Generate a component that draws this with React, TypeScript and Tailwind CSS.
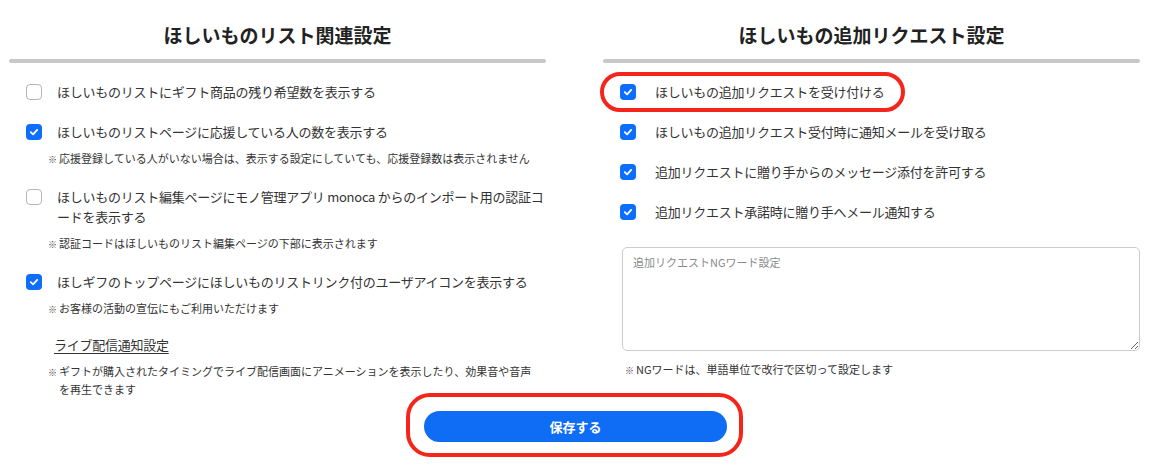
import React from "react";

function Check({ checked }: { checked: boolean }) {
  if (checked) {
    return (
      <span className="mt-[2px] flex h-[16px] w-[16px] shrink-0 items-center justify-center rounded-[4px] bg-[#0d6efd]">
        <svg width="10" height="10" viewBox="0 0 10 10" fill="none">
          <path d="M1.8 5.2 L4.1 7.3 L8.2 2.9" stroke="white" strokeWidth="1.8" strokeLinecap="round" strokeLinejoin="round" />
        </svg>
      </span>
    );
  }
  return <span className="mt-[2px] block h-[16px] w-[16px] shrink-0 rounded-[4px] border border-[#b5b5b5] bg-white" />;
}

function Note({ children }: { children: React.ReactNode }) {
  return (
    <p className="mt-[8px] whitespace-nowrap pl-[50px] -indent-[11px] text-[11px] leading-[17px] text-[#333]">
      <span className="mr-[2px] text-[9px] text-[#444]">※</span>
      {children}
    </p>
  );
}

function LeftRow({ checked, children }: { checked: boolean; children: React.ReactNode }) {
  return (
    <div className="flex items-start gap-[15px] pl-[17px]">
      <Check checked={checked} />
      <span className="whitespace-nowrap text-[13px] leading-[20px] tracking-[-0.25px] text-[#333]">{children}</span>
    </div>
  );
}

function RightRow({ checked, children }: { checked: boolean; children: React.ReactNode }) {
  return (
    <div className="flex items-start gap-[19px] pl-[17px]">
      <Check checked={checked} />
      <span className="whitespace-nowrap text-[13px] leading-[20px] tracking-[-0.25px] text-[#333]">{children}</span>
    </div>
  );
}

function Heading({ children }: { children: React.ReactNode }) {
  return (
    <div>
      <h2 className="mt-[22px] text-center text-[19px] font-bold leading-[26px] text-[#222]">{children}</h2>
      <div className="mt-[11px] h-[4px] rounded-full bg-[#c8c8c8]" />
    </div>
  );
}

export default function App() {
  return (
    <div className="relative h-[469px] w-[1151px] overflow-hidden bg-white font-['Noto_Sans_CJK_JP','Liberation_Sans',sans-serif]">
      <div className="grid grid-cols-[537px_537px] gap-x-[57px] pl-[9px]">
        {/* Left column */}
        <div>
          <Heading>ほしいものリスト関連設定</Heading>
          <div className="mt-[19px]">
            <LeftRow checked={false}>ほしいものリストにギフト商品の残り希望数を表示する</LeftRow>
          </div>
          <div className="mt-[20px]">
            <LeftRow checked={true}>ほしいものリストページに応援している人の数を表示する</LeftRow>
            <Note>応援登録している人がいない場合は、表示する設定にしていても、応援登録数は表示されません</Note>
          </div>
          <div className="mt-[19px]">
            <LeftRow checked={false}>
              ほしいものリスト編集ページにモノ管理アプリ monoca からのインポート用の認証コ
              <br />
              ードを表示する
            </LeftRow>
            <Note>認証コードはほしいものリスト編集ページの下部に表示されます</Note>
          </div>
          <div className="mt-[19px]">
            <LeftRow checked={true}>ほしギフのトップページにほしいものリストリンク付のユーザアイコンを表示する</LeftRow>
            <Note>お客様の活動の宣伝にもご利用いただけます</Note>
          </div>
          <div className="mt-[17px] pl-[45px] text-[13px] leading-[20px]">
            <a className="tracking-[-0.25px] text-[#333] underline underline-offset-[3px]">ライブ配信通知設定</a>
          </div>
          <Note>
            ギフトが購入されたタイミングでライブ配信画面にアニメーションを表示したり、効果音や音声
            <br />
            を再生できます
          </Note>
        </div>

        {/* Right column */}
        <div>
          <Heading>ほしいもの追加リクエスト設定</Heading>
          <div className="mt-[19px] flex flex-col gap-[20px]">
            <RightRow checked={true}>ほしいもの追加リクエストを受け付ける</RightRow>
            <RightRow checked={true}>ほしいもの追加リクエスト受付時に通知メールを受け取る</RightRow>
            <RightRow checked={true}>追加リクエストに贈り手からのメッセージ添付を許可する</RightRow>
            <RightRow checked={true}>追加リクエスト承諾時に贈り手へメール通知する</RightRow>
          </div>
          <div className="ml-[19px] mt-[25px]">
            <textarea
              placeholder="追加リクエストNGワード設定"
              className="block h-[104px] w-[518px] rounded-[5px] border border-[#c9ccd1] px-[10px] py-[5px] text-[11px] leading-[18px] text-[#333] placeholder:text-[#8a8a8a] outline-none"
            />
          </div>
          <p className="mt-[10px] pl-[22px] text-[11px] leading-[17px] text-[#333]">
            <span className="mr-[2px] text-[9px] text-[#444]">※</span>NGワードは、単語単位で改行で区切って設定します
          </p>
        </div>
      </div>

      <div className="mt-[13px] flex justify-center">
        <button className="h-[31px] w-[303px] rounded-full bg-[#0e6cf5] text-[13px] font-semibold text-white">
          保存する
        </button>
      </div>

      {/* annotation rings */}
      <div className="pointer-events-none absolute left-[600px] top-[72px] h-[40px] w-[305px] rounded-full border-[4px] border-[#f4261c]" />
      <div className="pointer-events-none absolute left-[406px] top-[393px] h-[64px] w-[337px] rounded-[24px] border-[4px] border-[#f4261c]" />
    </div>
  );
}
